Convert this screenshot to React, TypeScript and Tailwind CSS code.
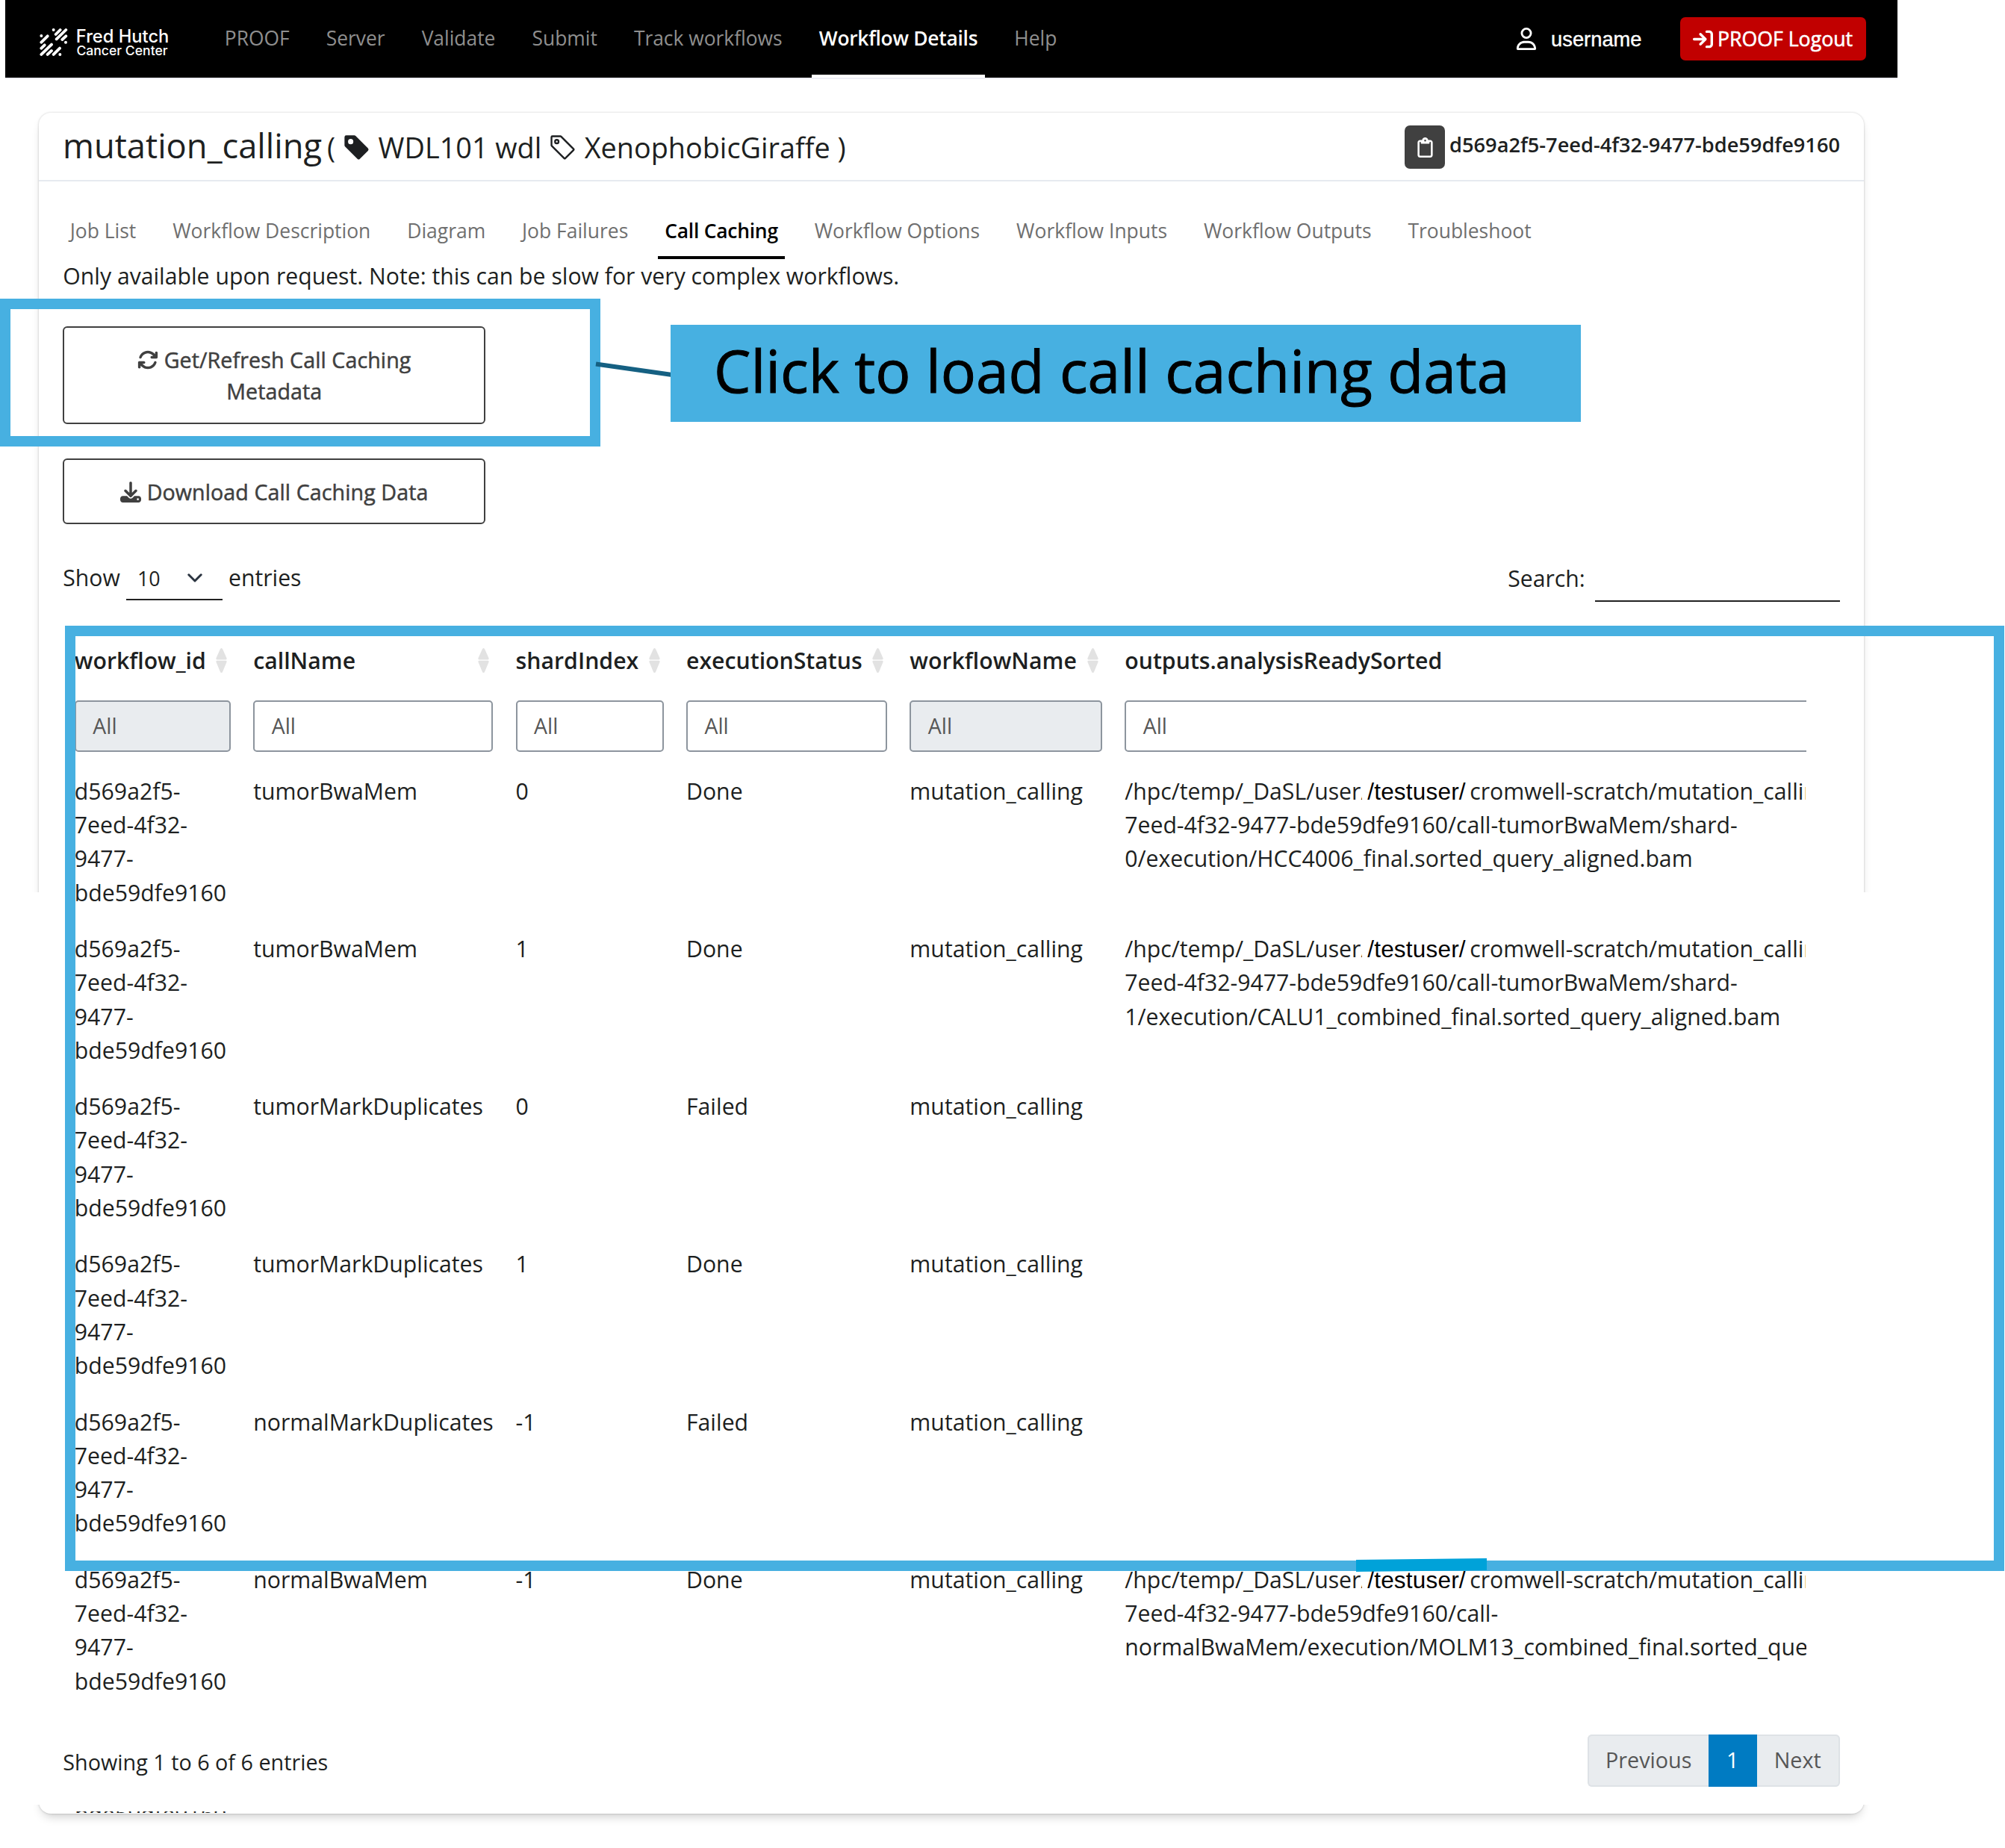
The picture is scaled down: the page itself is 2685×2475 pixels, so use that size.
import React from "react";
import { BsTag, BsTagFill } from "react-icons/bs";
import { FaArrowRightToBracket, FaArrowsRotate, FaDownload, FaRegClipboard, FaRegUser } from "react-icons/fa6";

const NAV = ["PROOF", "Server", "Validate", "Submit", "Track workflows", "Workflow Details", "Help"];
const TABS = [
  "Job List",
  "Workflow Description",
  "Diagram",
  "Job Failures",
  "Call Caching",
  "Workflow Options",
  "Workflow Inputs",
  "Workflow Outputs",
  "Troubleshoot",
];
const COLUMNS = [
  { name: "workflow_id", disabled: true, sortable: true },
  { name: "callName", disabled: false, sortable: true },
  { name: "shardIndex", disabled: false, sortable: true },
  { name: "executionStatus", disabled: false, sortable: true },
  { name: "workflowName", disabled: true, sortable: true },
  { name: "outputs.analysisReadySorted", disabled: false, sortable: false },
];
const ID_LINES = ["d569a2f5-", "7eed-4f32-", "9477-", "bde59dfe9160"];
const ROWS: { call: string; shard: string; status: string; output: string[] }[] = [
  {
    call: "tumorBwaMem",
    shard: "0",
    status: "Done",
    output: ["7eed-4f32-9477-bde59dfe9160/call-tumorBwaMem/shard-", "0/execution/HCC4006_final.sorted_query_aligned.bam"],
  },
  {
    call: "tumorBwaMem",
    shard: "1",
    status: "Done",
    output: ["7eed-4f32-9477-bde59dfe9160/call-tumorBwaMem/shard-", "1/execution/CALU1_combined_final.sorted_query_aligned.bam"],
  },
  { call: "tumorMarkDuplicates", shard: "0", status: "Failed", output: [] },
  { call: "tumorMarkDuplicates", shard: "1", status: "Done", output: [] },
  { call: "normalMarkDuplicates", shard: "-1", status: "Failed", output: [] },
  {
    call: "normalBwaMem",
    shard: "-1",
    status: "Done",
    output: ["7eed-4f32-9477-bde59dfe9160/call-", "normalBwaMem/execution/MOLM13_combined_final.sorted_que"],
  },
];

const GRID = "grid grid-cols-[209px_321px_198px_269px_257.5px_960px] gap-x-[30.4px] pl-[15.5px]";

function Logo() {
  return (
    <div className="flex">
      <svg viewBox="24 36 114 118" className="mt-[37px] h-[39.3px] w-[38px]">
        <g stroke="#fff" strokeWidth="11.5" strokeLinecap="round">
          <path d="M89 63L107 45M92 82L130 45M115 84L130 70M31 95L56 70M31 119L44 106M31 144L72 104M56 144L72 129M80 144L105 119" />
        </g>
        <g fill="#fff">
          <circle cx="31" cy="69" r="6" />
          <circle cx="80" cy="45" r="6" />
          <circle cx="129" cy="95" r="6" />
          <circle cx="106" cy="144" r="6" />
        </g>
      </svg>
      <div className="ml-[10.8px] mt-[38.5px] whitespace-nowrap font-['Inter',sans-serif] font-medium text-white">
        <div className="text-[23.7px] leading-[20px]">Fred Hutch</div>
        <div className="pl-[0.6px] text-[17.6px] leading-[18px]">Cancer Center</div>
      </div>
    </div>
  );
}

function NavBar() {
  return (
    <header className="ml-[7px] flex h-[106px] w-[2534px] border-b-2 border-[#eeeef6] bg-black bg-clip-padding pl-[46px] pr-[42.5px]">
      <Logo />
      <nav className="ml-[65px] flex gap-[30.3px]">
        {NAV.map((n) => (
          <a
            key={n}
            className={
              n === "Workflow Details"
                ? "h-[104px] whitespace-nowrap border-b-4 border-white px-[9.4px] text-[26.4px] font-semibold leading-[102px] tracking-[-0.27px] text-white"
                : "h-[104px] whitespace-nowrap px-[9.4px] text-[26.4px] leading-[102px] text-[#8f8f8f]"
            }
          >
            {n}
          </a>
        ))}
      </nav>
      <div className="ml-auto flex items-start text-white">
        <FaRegUser className="mt-[37px] size-[30px]" />
        <span className="ml-[18px] mt-[33px] font-['Liberation_Sans',sans-serif] text-[27.3px] leading-[40px] [-webkit-text-stroke:0.4px_white]">username</span>
        <button className="ml-[51px] mt-[22.5px] flex h-[58.5px] w-[249px] items-center justify-center gap-[6px] whitespace-nowrap rounded-[7px] bg-[#c10000] pt-px text-[26.7px] font-medium [-webkit-text-stroke:0.6px_white]">
          <FaArrowRightToBracket className="size-[27px]" />
          PROOF Logout
        </button>
      </div>
    </header>
  );
}

function SortArrows() {
  return (
    <svg viewBox="0 0 15 33" className="h-[33px] w-[15px]" fill="#e2e2e2">
      <path d="M7.5 0Q8.6 0 9.2 1.6L14.6 13.5Q15 15.4 13.4 15.4H1.6Q0 15.4 0.4 13.5L5.8 1.6Q6.4 0 7.5 0Z" />
      <path d="M7.5 33Q8.6 33 9.2 31.4L14.6 18.5Q15 16.8 13.4 16.8H1.6Q0 16.8 0.4 18.5L5.8 31.4Q6.4 33 7.5 33Z" />
    </svg>
  );
}

function CallTable() {
  return (
    <div className="mt-[56px] w-[2334.5px] overflow-hidden whitespace-nowrap text-[30.24px] leading-[45.3px]">
      <div className={GRID}>
        {COLUMNS.map((c) => (
          <div key={c.name}>
            <div className="flex items-center justify-between pr-[5px] font-semibold">
              {c.name}
              {c.sortable && <SortArrows />}
            </div>
            <div
              className={
                c.disabled
                  ? "mt-[30.7px] h-[68.5px] rounded-[5px] border-2 border-[#8d959e] bg-[#e9ecef] pl-[22.5px] text-[28.4px] leading-[65px] text-[#565656]"
                  : "mt-[30.7px] h-[68.5px] rounded-[5px] border-2 border-[#8d959e] bg-white pl-[22.5px] text-[28.4px] leading-[65px] text-[#565656]"
              }
            >
              All
            </div>
          </div>
        ))}
      </div>
      <div className="mt-[15px]">
        {ROWS.map((r, i) => (
          <div key={i} className={`${GRID} h-[211.2px] pt-[15px]`}>
            <div>
              {ID_LINES.map((l) => (
                <div key={l}>{l}</div>
              ))}
            </div>
            <div>{r.call}</div>
            <div>{r.shard}</div>
            <div>{r.status}</div>
            <div>mutation_calling</div>
            <div className="tracking-[-0.03px]">
              {r.output.length > 0 && (
                <div className="flex h-[45.3px] items-baseline">
                  <span className="w-[318px] overflow-hidden">/hpc/temp/_DaSL/user/</span>
                  <span className="ml-[7px] w-[137px] font-['Liberation_Sans',sans-serif] text-[31.5px] tracking-[0.2px] text-black">
                    /testuser/
                  </span>
                  <span className="w-[449.5px] overflow-hidden">cromwell-scratch/mutation_callin</span>
                </div>
              )}
              {r.output.map((l) => (
                <div key={l}>{l}</div>
              ))}
            </div>
          </div>
        ))}
      </div>
    </div>
  );
}

function Card() {
  return (
    <main className="ml-[52px] mt-[45px] h-[2278px] w-[2444px] rounded-[16px] bg-white shadow-[0_0_3px_rgba(0,0,0,0.2),0_8px_14px_-5px_rgba(0,0,0,0.22)]">
      <div className="flex h-[92px] justify-between whitespace-nowrap border-b-2 border-[#e6eaf0] px-[32px]">
        <h1 className="flex items-baseline gap-[7px] text-[45.3px] leading-[88px]">
          <span>mutation_calling</span>
          <span className="text-[37.8px]">
            ( <BsTagFill className="inline size-[37.8px] align-[-0.135em]" /> WDL101 wdl{" "}
            <BsTag className="inline size-[37.8px] align-[-0.135em]" /> XenophobicGiraffe )
          </span>
        </h1>
        <div className="flex">
          <span className="mt-[17px] flex h-[58px] w-[54px] items-center justify-center rounded-[7px] bg-[#404040] text-white">
            <FaRegClipboard className="size-[27px]" />
          </span>
          <span className="ml-[6px] text-[27.2px] font-semibold leading-[86px]">d569a2f5-7eed-4f32-9477-bde59dfe9160</span>
        </div>
      </div>
      <div className="px-[32.3px]">
        <nav className="flex gap-[30.1px] pt-[28px]">
          {TABS.map((t) => (
            <a
              key={t}
              className={
                t === "Call Caching"
                  ? "h-[76px] whitespace-nowrap border-b-4 border-black px-[9.4px] text-[26.46px] font-semibold leading-[77px] tracking-[-0.25px] text-black"
                  : "h-[76px] whitespace-nowrap px-[9.4px] text-[26.46px] leading-[77px] text-[#6f6f6f]"
              }
            >
              {t}
            </a>
          ))}
        </nav>
        <p className="text-[30.2px] leading-[45.3px]">
          Only available upon request. Note: this can be slow for very complex workflows.
        </p>
        <button className="mt-[45px] block h-[131px] w-[566px] rounded-[6px] border-2 border-[#404040] pt-px text-center text-[28.6px] font-medium leading-[42.6px] tracking-[0.1px] text-[#404040] [-webkit-text-stroke:0.5px_#404040]">
          <FaArrowsRotate className="inline size-[28px] align-[-0.125em]" /> Get/Refresh Call Caching
          <br />
          Metadata
        </button>
        <button className="mt-[46px] block h-[88px] w-[566px] rounded-[6px] border-2 border-[#404040] pt-px text-center text-[28.6px] font-medium leading-[42.6px] tracking-[0.1px] text-[#404040] [-webkit-text-stroke:0.5px_#404040]">
          <FaDownload className="inline size-[28px] align-[-0.125em]" /> Download Call Caching Data
        </button>
        <div className="mt-[42px] flex justify-between text-[30.2px]">
          <div className="flex h-[60px] leading-[60px]">
            <span className="w-[84.7px]">Show</span>
            <span className="flex w-[129.5px] items-center border-b-2 border-[#222] pl-[15px] pt-[3px] text-[26.8px] leading-[60px]">
              10
              <svg viewBox="0 0 20 12" className="-mt-[2px] ml-[36.5px] h-[12px] w-[20px]" fill="none" stroke="#2b3440" strokeWidth="3" strokeLinecap="round" strokeLinejoin="round">
                <path d="M1.8 1.8L10 10L18.2 1.8" />
              </svg>
            </span>
            <span className="ml-[7.5px]">entries</span>
          </div>
          <div className="flex h-[62px] leading-[61px]">
            <span className="w-[116.5px]">Search:</span>
            <span className="w-[328px] border-b-2 border-[#222]" />
          </div>
        </div>
        <CallTable />
        <div className="mt-[34px] flex justify-between text-[28.75px]">
          <span className="leading-[73px]">Showing 1 to 6 of 6 entries</span>
          <div className="flex h-[70px] rounded-[6px] bg-[#e9ecef] leading-[64px] text-[#565656]">
            <span className="w-[162px] rounded-l-[6px] border-2 border-r-0 border-[#dee2e6] text-center">Previous</span>
            <span className="w-[65px] border-2 border-[#007bc2] bg-[#007bc2] text-center text-white">1</span>
            <span className="w-[111px] rounded-r-[6px] border-2 border-l-0 border-[#dee2e6] text-center">Next</span>
          </div>
        </div>
      </div>
    </main>
  );
}

export default function App() {
  return (
    <div className="relative h-[2475px] w-[2685px] overflow-hidden bg-white font-['Open_Sans',sans-serif] text-[#1d1f21]">
      <NavBar />
      <Card />

      {/* The lower half of the page has no card edge at the sides */}
      <div className="absolute left-[30px] top-[1195px] h-[1222px] w-[40px] bg-white" />
      <div className="absolute left-[2478px] top-[1195px] h-[1222px] w-[50px] bg-white" />

      {/* Sliver of the next row, cut off by the card's bottom edge */}
      <div className="absolute left-[100px] top-[2425.5px] h-[2.5px] w-[210px] overflow-hidden">
        <div className="-mt-[18.5px] text-[30.24px] leading-[45.3px]">bde59dfe9160</div>
      </div>

      {/* Annotations */}
      <div className="absolute left-0 top-[400px] h-[198px] w-[804px] border-[14px] border-[#47b0e1]" />
      <div className="absolute left-[87px] top-[838px] h-[1266px] w-[2597px] border-[14px] border-[#47b0e1]" />
      <svg className="absolute left-[790px] top-[470px] h-[50px] w-[120px]" viewBox="0 0 120 50">
        <path d="M8 17.5L110 32" stroke="#156082" strokeWidth="6" />
      </svg>
      <svg className="absolute left-[1810px] top-[2080px] h-[30px] w-[190px]" viewBox="0 0 190 30">
        <path d="M6 9L181 7V23L6 25Z" fill="#00a2d9" />
      </svg>
      <div className="absolute left-[898px] top-[435px] h-[130px] w-[1219px] whitespace-nowrap bg-[#47b0e1] pl-[58px] text-[78.5px] leading-[121px] text-black [-webkit-text-stroke:1px_black]">
        Click to load call caching data
      </div>
    </div>
  );
}
